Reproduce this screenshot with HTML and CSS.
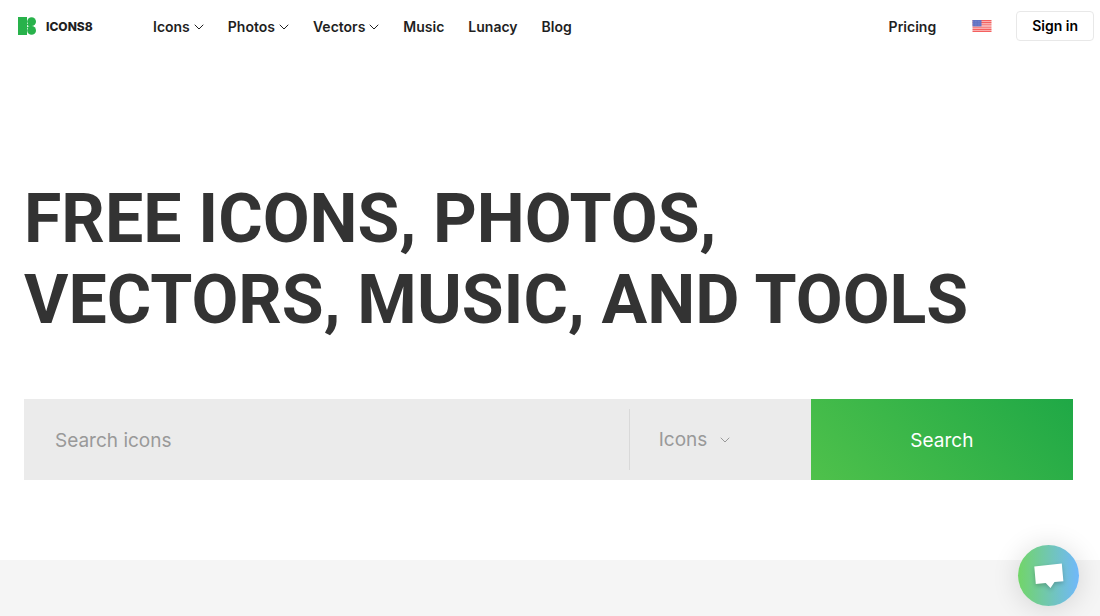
FILE: index.html
```html
<!DOCTYPE html>
<html lang="en">
<head>
	<meta charset="UTF-8">
	<meta name="viewport" content="width=device-width, initial-scale=1">
	<title>Icons8</title>
	<link rel="stylesheet" href="styles.css">
</head>
<body>
	<header class="header">
		<a class="logo" href="#">
			<svg class="logo-mark" viewBox="0 0 18 18" aria-hidden="true">
				<path fill="#28b24b" d="M0 0h9v18H0z"/>
				<circle fill="#28b24b" cx="13.6" cy="4.6" r="4.4"/>
				<circle fill="#28b24b" cx="13.6" cy="13.4" r="4.4"/>
				<path fill="#28b24b" d="M9 7h3l2 2-2 2H9z"/>
				<path fill="#fff" d="M9 7.4c.6 1 1.6 1.5 2.6 1.6-1 .2-2 .8-2.6 1.7z"/>
			</svg>
			<span>ICONS8</span>
		</a>
		<nav class="nav">
			<button class="nav-item" type="button">Icons
				<svg class="chevron" viewBox="0 0 10 6"><path d="M1 1l4 4 4-4"/></svg>
			</button>
			<button class="nav-item" type="button">Photos
				<svg class="chevron" viewBox="0 0 10 6"><path d="M1 1l4 4 4-4"/></svg>
			</button>
			<button class="nav-item" type="button">Vectors
				<svg class="chevron" viewBox="0 0 10 6"><path d="M1 1l4 4 4-4"/></svg>
			</button>
			<a class="nav-item" href="#">Music</a>
			<a class="nav-item" href="#">Lunacy</a>
			<a class="nav-item" href="#">Blog</a>
		</nav>
		<div class="account">
			<a class="nav-item" href="#">Pricing</a>
			<button class="lang" type="button" aria-label="Language">
				<svg class="flag" viewBox="0 0 19 12" aria-hidden="true">
					<path fill="#fff" d="M0 0h19v12H0z"/>
					<path stroke="#f4605f" stroke-width="1.2" d="M0 .6h19M0 2.4h19M0 4.2h19M0 6h19M0 7.8h19M0 9.6h19M0 11.4h19"/>
					<path fill="#6272c3" d="M0 0h9v6.4H0z"/>
					<path stroke="#8f9bd8" stroke-width=".5" stroke-dasharray=".7 .8" d="M1 1.4h7M1 3.2h7M1 5h7"/>
				</svg>
			</button>
			<a class="sign-in" href="#">Sign in</a>
		</div>
	</header>

	<main class="hero">
		<h1 class="title">FREE ICONS, PHOTOS,<br>VECTORS, MUSIC, AND TOOLS</h1>
		<form class="search">
			<input class="search-input" type="text" placeholder="Search icons" aria-label="Search icons">
			<div class="search-type">
				<select class="search-select" aria-label="Search in">
					<option>Icons</option>
					<option>Photos</option>
					<option>Vectors</option>
					<option>Music</option>
				</select>
				<svg class="chevron" viewBox="0 0 10 6"><path d="M1 1l4 4 4-4"/></svg>
			</div>
			<button class="search-button" type="submit">Search</button>
		</form>
	</main>

	<section class="more"></section>

	<button class="chat" type="button" aria-label="Open chat">
		<svg class="chat-icon" viewBox="0 0 30 26" aria-hidden="true">
			<path fill="#fff" d="M.3 3.6L27.8.6l1.6 17.6-8.9.9-4 5.9-4.8-5-9.9.9z"/>
		</svg>
	</button>
</body>
</html>
```

FILE: styles.css
```css
*{
	box-sizing: border-box;
	margin: 0;
	padding: 0;
}
body{
	display: flex;
	flex-direction: column;
	min-height: 100vh;
	background-color: #fff;
	color: #1f1f1f;
	font-family: Inter, "Liberation Sans", sans-serif;
	font-size: 14px;
}
button, input, select{
	border: 0;
	background: none;
	color: inherit;
	font: inherit;
}
button, select{
	cursor: pointer;
}
a{
	color: inherit;
	text-decoration: none;
}

/* header */
.header{
	display: flex;
	align-items: center;
	padding: 11px 6px 0 18px;
}
.logo{
	display: flex;
	align-items: center;
	gap: 10px;
	width: 135px;
	font-size: 12px;
	font-weight: 800;
}
.logo-mark{
	width: 18px;
	height: 18px;
}
.nav, .account{
	display: flex;
	align-items: center;
	gap: 24px;
}
.nav-item{
	display: flex;
	align-items: center;
	gap: 4px;
	padding-top: 2px;
	line-height: 20px;
	font-weight: 600;
}
.chevron{
	width: 10px;
	height: 6px;
	fill: none;
	stroke: currentColor;
	stroke-linecap: round;
	stroke-linejoin: round;
}
.account{
	margin-left: auto;
	gap: 36px;
}
.lang{
	display: flex;
}
.flag{
	width: 20px;
	height: 12px;
}
.sign-in{
	margin-left: -12px;
	padding: 4px 15px;
	border: 1px solid #e8e8e8;
	border-radius: 4px;
	line-height: 20px;
	font-weight: 600;
	color: #000;
}

/* hero */
.hero{
	padding: 138px 27px 80px 24px;
}
.title{
	margin-bottom: 58px;
	color: #333;
	font-family: Roboto, Inter, sans-serif;
	font-size: 68px;
	font-weight: 700;
	line-height: 81px;
	white-space: nowrap;
}
.search{
	display: flex;
	height: 81px;
	background-color: #ebebeb;
	font-size: 19px;
}
.search-input{
	flex: 1;
	min-width: 0;
	padding: 2px 31px 0;
}
.search-input::placeholder{
	color: #999;
}
.search-type{
	display: flex;
	align-items: center;
	width: 182px;
	margin: 10px 0;
	border-left: 1px solid #d9d9d9;
	color: #999;
}
.search-select{
	height: 100%;
	padding: 0 13px 0 29px;
	appearance: none;
	field-sizing: content;
}
.search-button{
	width: 25%;
	padding-top: 2px;
	background-image: linear-gradient(45deg, #4fc14b, #1fa846);
	color: #fff;
}

.more{
	flex: 1;
	background-color: #f5f5f5;
}

/* chat widget */
.chat{
	position: fixed;
	right: 21px;
	bottom: 10px;
	display: flex;
	align-items: center;
	justify-content: center;
	width: 61px;
	height: 61px;
	border-radius: 50%;
	background-image: linear-gradient(90deg, #72d568, #70b8fb);
	box-shadow: 0 2px 28px rgba(0, 0, 0, .14);
}
.chat-icon{
	width: 30px;
	height: 26px;
	filter: drop-shadow(0 2px 2px rgba(0, 0, 0, .2));
}
```
